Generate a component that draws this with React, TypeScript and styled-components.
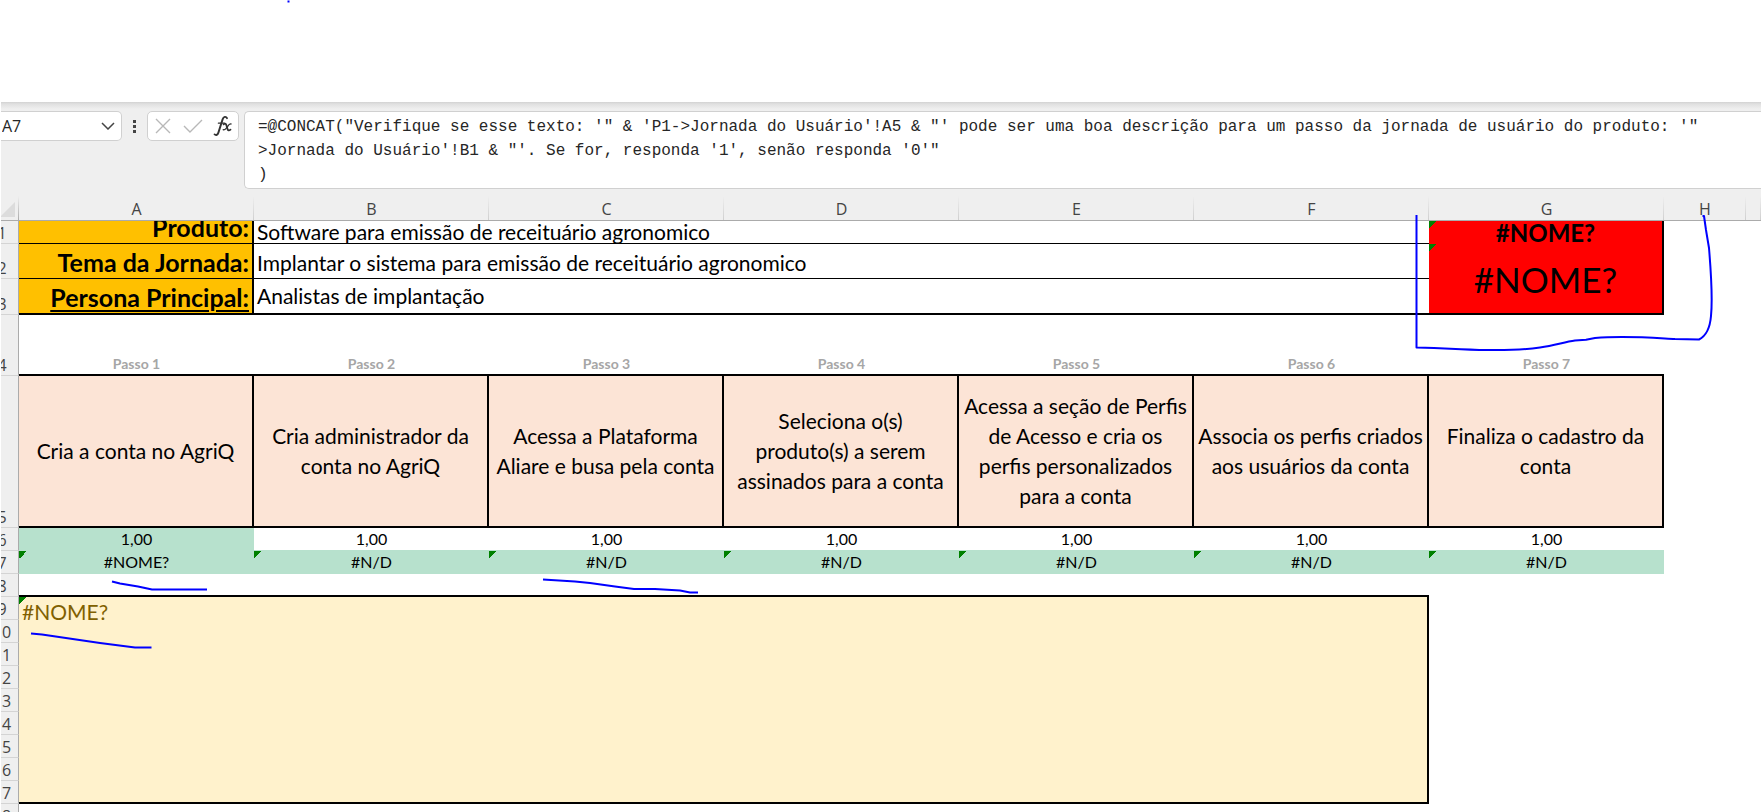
import React from "react";
import styled, { createGlobalStyle, css } from "styled-components";

const GlobalStyle = createGlobalStyle`
  *, *::before, *::after { box-sizing: border-box; }
  body { margin: 0; background: #fff; overflow: hidden; }
`;

const sheetFont = 'Lato, "Liberation Sans", sans-serif';
const uiFont = '"Open Sans", "Noto Sans", sans-serif';

const Page = styled.main`
  position: relative;
  display: flex;
  flex-direction: column;
  height: 100vh;
  padding-left: 1px;
  overflow: hidden;
  color: #000;
  font-family: ${sheetFont};
`;

const BlankTop = styled.header`
  flex: 0 0 102px;
`;

const FormulaStrip = styled.section`
  display: flex;
  flex: none;
  align-items: flex-start;
  padding-top: 9px;
  background: linear-gradient(#d2d2d2 0, #e0e0e0 2px, #efefef 7px);
`;

const barField = css`
  border: 1px solid #d0d0d0;
  border-radius: 5px;
  background: #fff;
`;

const NameBox = styled.div`
  ${barField}
  display: flex;
  align-items: center;
  width: 121px;
  height: 30px;
  border-left: 0;
  border-top-left-radius: 0;
  border-bottom-left-radius: 0;
`;

const NameInput = styled.input`
  flex: 1;
  min-width: 0;
  height: 26px;
  padding: 0 0 0 1px;
  border: 0;
  outline: 0;
  background: transparent;
  color: #262626;
  font: 16px ${uiFont};
`;

const IconButton = styled.button`
  display: flex;
  align-items: center;
  justify-content: center;
  padding: 0;
  border: 0;
  background: transparent;
  width: 26px;
  height: 28px;
`;

const Grip = styled.div`
  display: flex;
  align-items: center;
  justify-content: center;
  width: 25px;
  height: 30px;
`;

const FormulaButtons = styled.div`
  ${barField}
  display: flex;
  align-items: center;
  justify-content: space-between;
  width: 92px;
  height: 30px;
  padding: 0 2px;
`;

const FormulaInput = styled.textarea`
  ${barField}
  flex: 1;
  min-width: 0;
  height: 78px;
  margin-left: 5px;
  padding: 3px 0 0 13px;
  border-right: 0;
  border-top-right-radius: 0;
  border-bottom-right-radius: 0;
  outline: 0;
  resize: none;
  overflow: hidden;
  white-space: pre;
  color: #262626;
  font-family: "Liberation Mono", monospace;
  font-size: 16px;
  line-height: 24px;
`;

const Sheet = styled.table`
  width: 100%;
  flex: none;
  table-layout: fixed;
  border-collapse: separate;
  border-spacing: 0;

  td, th { padding: 0; }
`;

const Col = styled.col<{ $w?: number }>`
  ${(p) => p.$w && `width: ${p.$w}px;`}
`;

const Corner = styled.th`
  height: 32px;
  background:
    linear-gradient(#efefef, #ababab) right bottom / 1px 24px no-repeat,
    #efefef;
  border-bottom: 1px solid #ababab;
  vertical-align: bottom;

  svg { display: block; margin-bottom: 3px; }
`;

const ColumnHead = styled.th`
  height: 32px;
  border-bottom: 1px solid #ababab;
  background:
    linear-gradient(#efefef, #cfcfcf) right bottom / 1px 24px no-repeat,
    #efefef;
  color: #444;
  font: 400 16px/21px ${uiFont};
  vertical-align: bottom;
`;

const RowHead = styled.th<{ $h: number }>`
  height: ${(p) => p.$h}px;
  border-right: 1px solid #ababab;
  border-bottom: 1px solid #d4d4d4;
  background: #efefef;
  overflow: hidden;
  color: #444;
  font: 400 16px/20px ${uiFont};
  vertical-align: bottom;
`;

const RowNumber = styled.div`
  width: 34px;
  margin-left: -16px;
  text-align: center;
`;

const LabelCell = styled.td<{ $last?: boolean }>`
  border-right: 2px solid #000;
  border-bottom: ${(p) => (p.$last ? 2 : 1)}px solid #000;
  background: #ffc000;
  vertical-align: bottom;
`;

const Label = styled.div<{ $h: number; $underline?: boolean }>`
  display: flex;
  align-items: flex-end;
  justify-content: flex-end;
  height: ${(p) => p.$h}px;
  padding-right: 3px;
  overflow: hidden;
  font-size: 25px;
  font-weight: 700;
  line-height: 32px;
  white-space: nowrap;
  text-decoration: ${(p) => (p.$underline ? "underline" : "none")};
  text-decoration-thickness: 2px;
  text-underline-offset: 3px;
`;

const ValueCell = styled.td<{ $last?: boolean }>`
  border-bottom: ${(p) => (p.$last ? 2 : 1)}px solid #000;
  vertical-align: bottom;
`;

const Value = styled.div<{ $h: number; $pad?: number }>`
  display: flex;
  align-items: flex-end;
  height: ${(p) => p.$h}px;
  padding: 0 0 ${(p) => p.$pad ?? 0}px 3px;
  overflow: hidden;
  font-size: 21px;
  line-height: 22px;
  white-space: nowrap;
`;

const errorMark = css`
  background-image: linear-gradient(135deg, #008000 50%, transparent 50%);
  background-size: 8px 8px;
  background-repeat: no-repeat;
`;

const AlertCell = styled.td<{ $big?: boolean }>`
  background-color: #f00;
  ${errorMark}
  border-right: 2px solid #000;
  border-bottom: ${(p) => (p.$big ? "2px solid #000" : "0")};
  font-size: ${(p) => (p.$big ? 35 : 24)}px;
  font-weight: ${(p) => (p.$big ? 400 : 700)};
  line-height: ${(p) => (p.$big ? 40 : 22)}px;
  text-align: center;
  vertical-align: middle;
`;

const StepTitle = styled.td`
  border-bottom: 2px solid #000;
  color: #a6a6a6;
  font-size: 14px;
  font-weight: 700;
  line-height: 20px;
  text-align: center;
  vertical-align: bottom;
`;

const StepCell = styled.td`
  border-right: 2px solid #000;
  border-bottom: 2px solid #000;
  background: #fce4d6;
  font-size: 21px;
  line-height: 30px;
  text-align: center;
  vertical-align: middle;
  white-space: pre;
`;

const ScoreCell = styled.td<{ $filled?: boolean }>`
  border-bottom: 1px solid #b7e1cd;
  background: ${(p) => (p.$filled ? "#b7e1cd" : "#fff")};
  font-size: 16px;
  line-height: 22px;
  text-align: center;
`;

const ResultCell = styled.td`
  background-color: #b7e1cd;
  ${errorMark}
  font-size: 16px;
  line-height: 22px;
  text-align: center;
  vertical-align: top;
`;

const GapCell = styled.td`
  border-bottom: 2px solid #000;
`;

const NoteCell = styled.td`
  border-right: 2px solid #000;
  border-bottom: 2px solid #000;
  background-color: #fff2cc;
  ${errorMark}
  color: #806000;
  font-size: 21px;
  line-height: 30px;
  vertical-align: top;
`;

const NoteText = styled.div`
  padding-left: 3px;
`;

const Ink = styled.svg`
  position: absolute;
  top: 0;
  left: 0;
  overflow: visible;
  pointer-events: none;
`;

const formula = `=@CONCAT("Verifique se esse texto: '" & 'P1->Jornada do Usuário'!A5 & "' pode ser uma boa descrição para um passo da jornada de usuário do produto: '"
>Jornada do Usuário'!B1 & "'. Se for, responda '1', senão responda '0'"
)`;

const columns = ["A", "B", "C", "D", "E", "F", "G", "H", ""];

const steps = [
  "Cria a conta no AgriQ",
  "Cria administrador da\nconta no AgriQ",
  "Acessa a Plataforma\nAliare e busa pela conta",
  "Seleciona o(s)\nproduto(s) a serem\nassinados para a conta",
  "Acessa a seção de Perfis\nde Acesso e cria os\nperfis personalizados\npara a conta",
  "Associa os perfis criados\naos usuários da conta",
  "Finaliza o cadastro da\nconta",
];

const noteRows = [10, 11, 12, 13, 14, 15, 16, 17, 18];

function RowHeader({ n, h = 23 }: { n: number; h?: number }) {
  return (
    <RowHead scope="row" $h={h}>
      <RowNumber>{n}</RowNumber>
    </RowHead>
  );
}

export default function App() {
  return (
    <>
      <GlobalStyle />
      <Page>
        <BlankTop />
        <FormulaStrip>
          <NameBox>
            <NameInput aria-label="Caixa de nome" defaultValue="A7" />
            <IconButton aria-label="Abrir lista de nomes">
              <svg width="14" height="8" viewBox="0 0 14 8" fill="none" stroke="#444" strokeWidth="1.5">
                <path d="M1 1l6 6 6-6" />
              </svg>
            </IconButton>
          </NameBox>
          <Grip>
            <svg width="3" height="13" viewBox="0 0 3 13" fill="#444">
              <path d="M0 0h3v3H0zM0 5h3v3H0zM0 10h3v3H0z" />
            </svg>
          </Grip>
          <FormulaButtons>
            <IconButton aria-label="Cancelar">
              <svg width="16" height="16" viewBox="0 0 16 16" stroke="#b8b8b8" strokeWidth="1.4">
                <path d="M1 1l14 14M15 1L1 15" />
              </svg>
            </IconButton>
            <IconButton aria-label="Inserir">
              <svg width="20" height="14" viewBox="0 0 20 14" fill="none" stroke="#b8b8b8" strokeWidth="1.4">
                <path d="M1 7l6 6L19 1" />
              </svg>
            </IconButton>
            <IconButton aria-label="Inserir função">
              <svg width="20" height="22" viewBox="0 0 20 22" fill="none" stroke="#333" strokeLinecap="round">
                <path d="M14 3.2C13 1.2 10.6 1.4 9.6 4.4L5.4 17.6C4.7 19.8 3 20.6 1.6 19.4" strokeWidth="1.9" />
                <path d="M5.4 8.2h6" strokeWidth="1.3" />
                <path d="M10.6 9.4c1.6-1.4 2.4-.6 2.9 1.2l1 3.4c.5 1.6 1.5 2 3 .6" strokeWidth="1.8" />
                <path d="M18 9c-2.200-.6-3 2.200-4.200 3.700-1 1.400-2.200 2.600-3.600 2" strokeWidth="1.3" />
              </svg>
            </IconButton>
          </FormulaButtons>
          <FormulaInput aria-label="Barra de fórmulas" wrap="off" spellCheck={false} defaultValue={formula} />
        </FormulaStrip>

        <Sheet>
          <colgroup>
            <Col $w={18} />
            {steps.map((s) => (
              <Col key={s} $w={235} />
            ))}
            <Col $w={82} />
            <Col />
          </colgroup>
          <thead>
            <tr>
              <Corner aria-label="Selecionar tudo">
                <svg width="14" height="15" viewBox="0 0 14 15" fill="#dcdcdc">
                  <path d="M14 0v15H0V14z" />
                </svg>
              </Corner>
              {columns.map((c, i) => (
                <ColumnHead key={i} scope="col">
                  {c}
                </ColumnHead>
              ))}
            </tr>
          </thead>
          <tbody>
            <tr>
              <RowHeader n={1} />
              <LabelCell>
                <Label $h={22}>Produto:</Label>
              </LabelCell>
              <ValueCell colSpan={5}>
                <Value $h={22}>Software para emissão de receituário agronomico</Value>
              </ValueCell>
              <AlertCell>#NOME?</AlertCell>
            </tr>
            <tr>
              <RowHeader n={2} h={35} />
              <LabelCell>
                <Label $h={34}>Tema da Jornada:</Label>
              </LabelCell>
              <ValueCell colSpan={5}>
                <Value $h={34} $pad={4}>Implantar o sistema para emissão de receituário agronomico</Value>
              </ValueCell>
              <AlertCell $big rowSpan={2}>#NOME?</AlertCell>
            </tr>
            <tr>
              <RowHeader n={3} h={36} />
              <LabelCell $last>
                <Label $h={34} $underline>Persona Principal:</Label>
              </LabelCell>
              <ValueCell $last colSpan={5}>
                <Value $h={34} $pad={6}>Analistas de implantação</Value>
              </ValueCell>
            </tr>
            <tr>
              <RowHeader n={4} h={61} />
              {steps.map((s, i) => (
                <StepTitle key={s}>Passo {i + 1}</StepTitle>
              ))}
            </tr>
            <tr>
              <RowHeader n={5} h={152} />
              {steps.map((s) => (
                <StepCell key={s}>{s}</StepCell>
              ))}
            </tr>
            <tr>
              <RowHeader n={6} />
              {steps.map((s, i) => (
                <ScoreCell key={s} $filled={i === 0}>1,00</ScoreCell>
              ))}
            </tr>
            <tr>
              <RowHeader n={7} />
              {steps.map((s, i) => (
                <ResultCell key={s}>{i === 0 ? "#NOME?" : "#N/D"}</ResultCell>
              ))}
            </tr>
            <tr>
              <RowHeader n={8} />
              <GapCell colSpan={6} />
            </tr>
            <tr>
              <RowHeader n={9} />
              <NoteCell colSpan={6} rowSpan={9}>
                <NoteText>#NOME?</NoteText>
              </NoteCell>
            </tr>
            {noteRows.map((n) => (
              <tr key={n}>
                <RowHeader n={n} />
              </tr>
            ))}
          </tbody>
        </Sheet>

        <Ink width="1" height="1" fill="none" stroke="#00f" strokeWidth="2" strokeLinejoin="round" aria-hidden="true">
          <path d="M287.500 1.500h2" />
          <path d="M1416.500 215V347.500L1434 348L1461 349.200C1490 350.500 1520 350.500 1540 347.500C1555 345.500 1564 342 1575 340.500L1586 339.800L1595 338C1625 335.500 1655 338 1675 339L1699 339.500C1706 336 1710 328 1711 316C1713 296 1711 272 1709 248L1706 230L1704 216H1702.500" />
          <path d="M112 581.500L120 583.500L138 586.500L152 589.500H207" />
          <path d="M31 633.500L42 634.500L100 643L135 647.500H151.500" />
          <path d="M543 579.500L575 581.500L590 583L615 586.500L634 589H655L680 590.500L690 592.500H698" />
        </Ink>
      </Page>
    </>
  );
}
